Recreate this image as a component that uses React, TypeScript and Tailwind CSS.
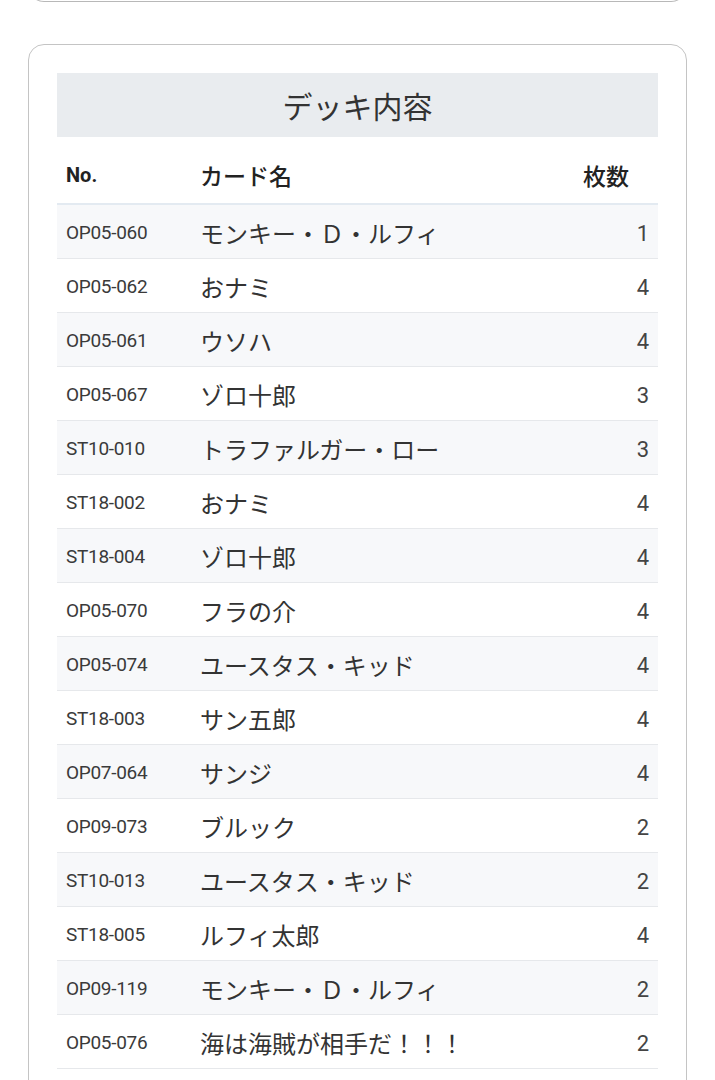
import type React from "react";

const deck: [string, string, number][] = [
  ["OP05-060", "モンキー・Ｄ・ルフィ", 1],
  ["OP05-062", "おナミ", 4],
  ["OP05-061", "ウソハ", 4],
  ["OP05-067", "ゾロ十郎", 3],
  ["ST10-010", "トラファルガー・ロー", 3],
  ["ST18-002", "おナミ", 4],
  ["ST18-004", "ゾロ十郎", 4],
  ["OP05-070", "フラの介", 4],
  ["OP05-074", "ユースタス・キッド", 4],
  ["ST18-003", "サン五郎", 4],
  ["OP07-064", "サンジ", 4],
  ["OP09-073", "ブルック", 2],
  ["ST10-013", "ユースタス・キッド", 2],
  ["ST18-005", "ルフィ太郎", 4],
  ["OP09-119", "モンキー・Ｄ・ルフィ", 2],
  ["OP05-076", "海は海賊が相手だ！！！", 2],
];

function DeckRow({no, name, count, striped}: {no: string; name: string; count: number; striped: boolean}) {
  return (
    <div
      className={`flex items-center h-[54px] px-[9px] pt-[3px] border-b border-[#e6e8eb] ${striped ? "bg-[#f7f8fa]" : "bg-white"}`}
    >
      <div className="w-[134px] text-[19px] text-[#3a3a3a] font-['Roboto',sans-serif] tracking-[-0.3px]">{no}</div>
      <div className="flex-1 text-[24px] text-[#333] font-['Noto_Sans_CJK_JP',sans-serif]">{name}</div>
      <div className="w-[86px] text-right text-[22px] text-[#444] font-['Roboto',sans-serif]">{count}</div>
    </div>
  );
}

function App() {
  return (
    <div className="min-h-[1080px] bg-white overflow-hidden font-['Roboto','Noto_Sans_CJK_JP',sans-serif]">
      <div className="mx-[28px] -mt-[14px] h-[16px] border-x-[1.5px] border-b-[1.5px] border-[#b8b8b8] rounded-b-[16px]" />

      <div className="mx-[28px] mt-[42px] border-[1.5px] border-[#c4c4c4] rounded-[16px] px-[28px] pt-[28px] pb-[28px]">
        <div className="h-[64px] bg-[#e9ecef] flex items-center justify-center text-[30px] text-[#333] font-['Noto_Sans_CJK_JP',sans-serif]">
          デッキ内容
        </div>

        <div className="flex items-center h-[68px] px-[9px] pt-[10px] border-b-[2px] border-[#e3eaf1] text-[#222]">
          <div className="w-[134px] text-[20px] font-bold font-['Roboto',sans-serif]">No.</div>
          <div className="flex-1 text-[23px] font-medium font-['Noto_Sans_CJK_JP',sans-serif]">カード名</div>
          <div className="w-[86px] text-center text-[23px] font-medium font-['Noto_Sans_CJK_JP',sans-serif]">枚数</div>
        </div>

        {deck.map(([no, name, count], i) => (
          <DeckRow key={no + i} no={no} name={name} count={count} striped={i % 2 === 0} />
        ))}
        <div className="h-[54px]" />
      </div>
    </div>
  );
}

export default App;
